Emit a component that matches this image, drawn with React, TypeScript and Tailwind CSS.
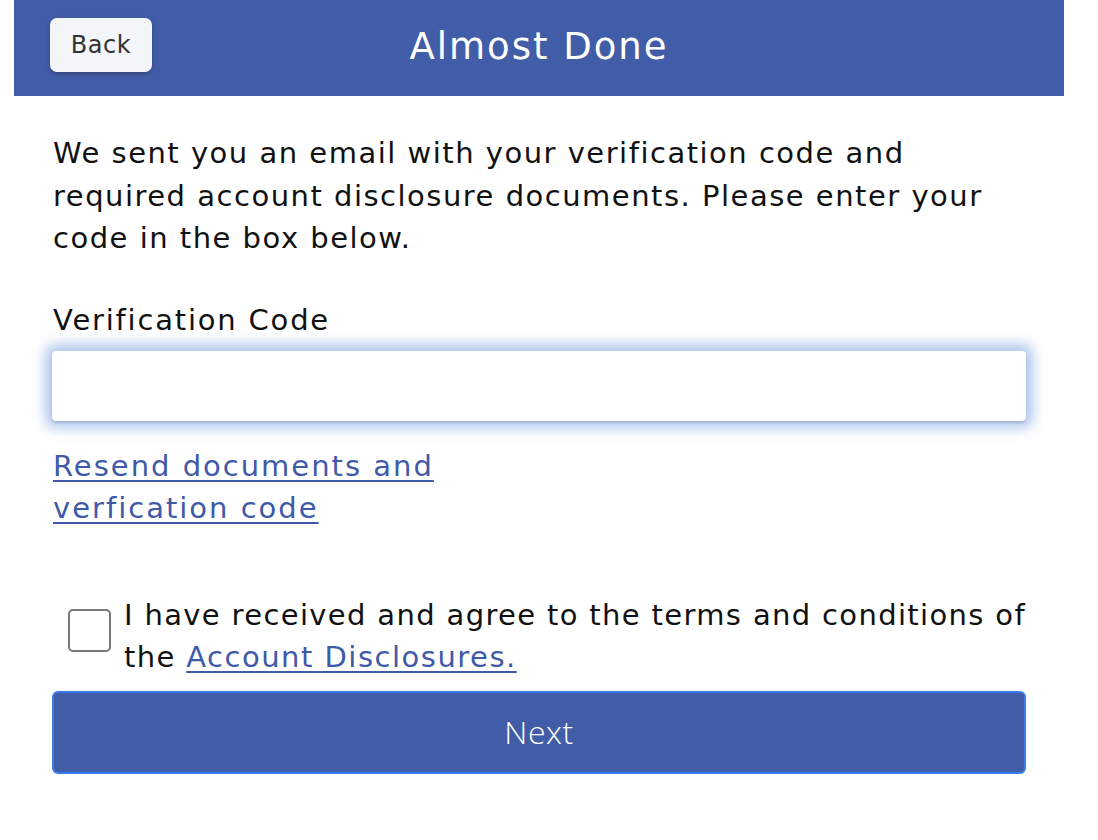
import React from "react";

export default function App() {
  const font = { fontFamily: '"DejaVu Sans", "Noto Sans", sans-serif' };
  return (
    <div className="w-[1098px] h-[840px] bg-white" style={font}>
      <div className="ml-[14px] w-[1050px]">
        <div className="relative h-[96px] bg-[#425da8] flex items-center justify-center">
          <button className="absolute left-[36px] top-[18px] w-[102px] h-[54px] rounded-[7px] bg-[#f3f5f9] text-[#333] text-[24px] tracking-[0.5px] shadow-[0_2px_4px_rgba(0,0,0,0.25)] flex items-center justify-center">
            Back
          </button>
          <h1 className="text-white text-[37px] tracking-[2px] -mt-[2px]">Almost Done</h1>
        </div>
        <div className="px-[38px] pt-[36px]">
          <p className="text-[29px] tracking-[1.5px] leading-[42.5px] text-[#111] pl-[1px]">
            We sent you an email with your verification code and required account disclosure documents. Please enter your code in the box below.
          </p>
          <div className="mt-[39px] text-[29px] tracking-[1.8px] leading-[42px] text-[#111] pl-[1px]">Verification Code</div>
          <input className="mt-[10px] block w-full h-[70px] rounded-[4px] bg-white outline-none shadow-[0_2px_2px_rgba(0,0,0,0.12),0_0_13px_7px_rgba(140,175,228,0.7)]" />
          <a href="#" className="block mt-[24px] w-[430px] text-[29px] tracking-[2px] leading-[42px] text-[#3f5aa8] underline underline-offset-[4px] pl-[1px]">
            Resend documents and verfication code
          </a>
          <div className="mt-[65px] flex items-start">
            <div className="ml-[16px] mt-[15px] w-[43px] h-[43px] shrink-0 rounded-[5px] border-2 border-[#777]" />
            <p className="ml-[13px] text-[29px] tracking-[1.35px] leading-[42.5px] text-[#111]">
              <span className="whitespace-nowrap">I have received and agree to the terms and conditions of</span>
              <br />
              the{" "}
              <a href="#" className="text-[#3f5aa8] underline underline-offset-[4px] tracking-[1.5px]">Account Disclosures.</a>
            </p>
          </div>
          <button className="mt-[12px] w-full h-[83px] rounded-[6px] bg-[#425da8] border-2 border-[#3b7df0] text-white text-[32px] tracking-[0.5px] font-light" style={{ fontFamily: '"Open Sans", sans-serif' }}>
            Next
          </button>
        </div>
      </div>
    </div>
  );
}
